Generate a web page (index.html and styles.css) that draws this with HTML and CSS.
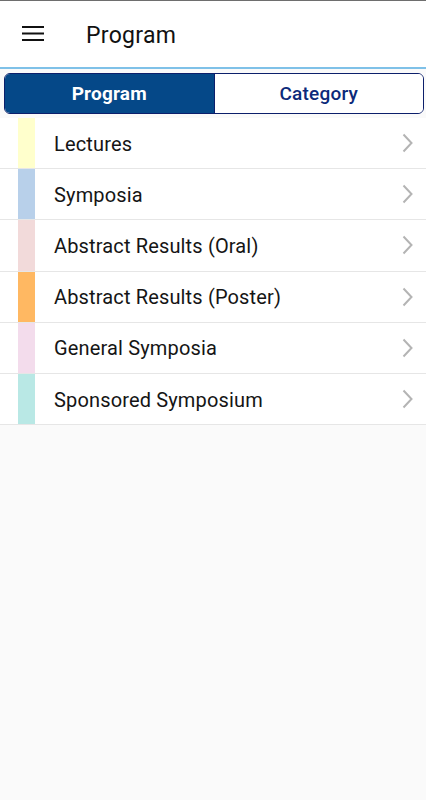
FILE: index.html
```html
<!DOCTYPE html>
<html lang="en">
<head>
    <meta charset="UTF-8">
    <meta name="viewport" content="width=device-width, initial-scale=1.0">
    <title>Program</title>
    <link rel="stylesheet" href="styles.css">
</head>
<body>

    <!-- App bar -->
    <header class="app-bar">
        <button class="menu-btn" aria-label="Menu">
            <svg width="22" height="15" viewBox="0 0 22 15">
                <rect x="0" y="0" width="22" height="2" fill="#111"/>
                <rect x="0" y="6.5" width="22" height="2" fill="#111"/>
                <rect x="0" y="13" width="22" height="2" fill="#111"/>
            </svg>
        </button>
        <h1 class="app-title">Program</h1>
    </header>

    <!-- Tabs -->
    <div class="segment">
        <button class="segment-btn active">Program</button>
        <button class="segment-btn">Category</button>
    </div>

    <!-- Program list -->
    <ul class="program-list">
        <li class="program-row"><span class="swatch" style="background:#ffffcc"></span><span class="label">Lectures</span><svg class="chevron" width="11" height="20" viewBox="0 0 11 20"><polyline points="1.5,1.5 9.5,10 1.5,18.5" fill="none" stroke="#b4b4b4" stroke-width="2"/></svg></li>
        <li class="program-row"><span class="swatch" style="background:#b8d0ea"></span><span class="label">Symposia</span><svg class="chevron" width="11" height="20" viewBox="0 0 11 20"><polyline points="1.5,1.5 9.5,10 1.5,18.5" fill="none" stroke="#b4b4b4" stroke-width="2"/></svg></li>
        <li class="program-row"><span class="swatch" style="background:#f2dada"></span><span class="label">Abstract Results (Oral)</span><svg class="chevron" width="11" height="20" viewBox="0 0 11 20"><polyline points="1.5,1.5 9.5,10 1.5,18.5" fill="none" stroke="#b4b4b4" stroke-width="2"/></svg></li>
        <li class="program-row"><span class="swatch" style="background:#ffb862"></span><span class="label">Abstract Results (Poster)</span><svg class="chevron" width="11" height="20" viewBox="0 0 11 20"><polyline points="1.5,1.5 9.5,10 1.5,18.5" fill="none" stroke="#b4b4b4" stroke-width="2"/></svg></li>
        <li class="program-row"><span class="swatch" style="background:#f3dcec"></span><span class="label">General Symposia</span><svg class="chevron" width="11" height="20" viewBox="0 0 11 20"><polyline points="1.5,1.5 9.5,10 1.5,18.5" fill="none" stroke="#b4b4b4" stroke-width="2"/></svg></li>
        <li class="program-row"><span class="swatch" style="background:#b9e8e5"></span><span class="label">Sponsored Symposium</span><svg class="chevron" width="11" height="20" viewBox="0 0 11 20"><polyline points="1.5,1.5 9.5,10 1.5,18.5" fill="none" stroke="#b4b4b4" stroke-width="2"/></svg></li>
    </ul>

</body>
</html>
```

FILE: styles.css
```css
body {
    margin: 0;
    font-family: Roboto, "Noto Sans", Arial, sans-serif;
    background-color: #fafafa;
    color: #111;
    border-top: 1px solid #6e6e6e;
    min-height: 799px;
}

.app-bar {
    display: flex;
    align-items: center;
    height: 66px;
    background: white;
    border-bottom: 2px solid #7fc1e8;
}

.menu-btn {
    display: flex;
    align-items: center;
    background: none;
    border: none;
    padding: 0;
    margin-left: 22px;
    margin-top: -2px;
    cursor: pointer;
}

.app-title {
    margin: 2px 0 0 42px;
    font-size: 23px;
    font-weight: 400;
    letter-spacing: 0.3px;
    color: #111;
}

.segment {
    display: flex;
    margin: 4px 2px 0 4px;
    height: 41px;
    border: 1.5px solid #0c1f6b;
    border-radius: 6px;
    overflow: hidden;
    background: white;
    box-sizing: border-box;
}

.segment-btn {
    flex: 1;
    border: none;
    background: white;
    color: #0c2a7a;
    font-family: inherit;
    font-size: 19px;
    font-weight: 500;
    letter-spacing: 0.2px;
    padding: 0;
    cursor: pointer;
}

.segment-btn.active {
    background: #054888;
    color: white;
    font-weight: 700;
    border-right: 1.5px solid #0c1f6b;
}

.program-list {
    list-style: none;
    margin: 4px 0 0 0;
    padding: 0;
    background: white;
}

.program-row {
    display: flex;
    align-items: center;
    height: 50.2px;
    border-bottom: 1px solid #e6e6e6;
    background: white;
}

.program-row .swatch {
    align-self: stretch;
    width: 17px;
    margin-left: 18px;
}

.program-row .label {
    flex: 1;
    margin-left: 19px;
    font-size: 20px;
    letter-spacing: 0.15px;
    color: #151515;
    padding-top: 1px;
}

.chevron {
    margin-right: 13px;
}
```
